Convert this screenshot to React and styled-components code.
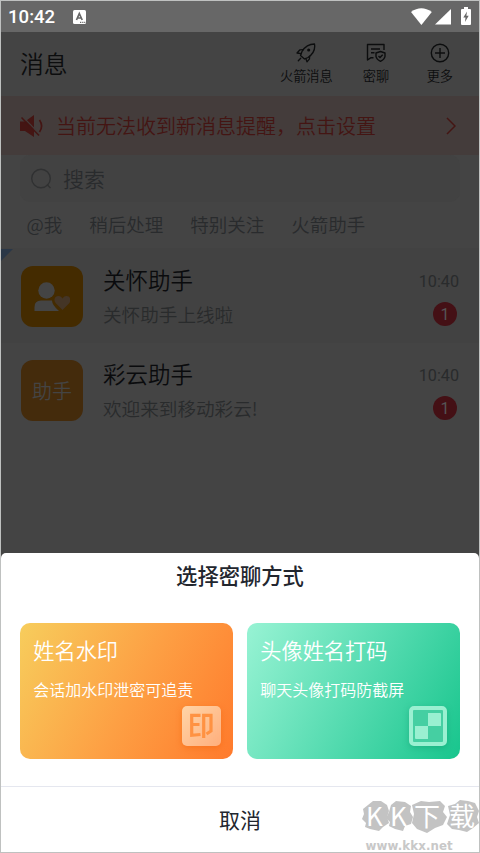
import React from 'react'
import styled, { createGlobalStyle } from 'styled-components'

const GlobalStyle = createGlobalStyle`
  * {
    box-sizing: border-box;
  }

  body {
    margin: 0;
    font-family: "Noto Sans CJK SC", "Noto Sans", sans-serif;
    font-weight: 350;
  }
`

const Phone = styled.div`
  position: relative;
  display: flex;
  flex-direction: column;
  width: 480px;
  height: 853px;
  overflow: hidden;
  border: 1px solid #bfc1c0;
  background-color: #444;
`

const StatusBar = styled.div`
  display: flex;
  align-items: center;
  height: 31px;
  flex: none;
  padding: 0 7px;
  background-color: #676767;
  color: #fff;
`

const Clock = styled.span`
  font: 500 18.6px/30px Roboto, sans-serif;
  width: 65px;
`

const StatusIcons = styled.div`
  display: flex;
  align-items: center;
  margin-left: auto;
`

const Header = styled.header`
  display: flex;
  justify-content: space-between;
  height: 64px;
  flex: none;
  padding: 0 26px 0 19px;
`

const PageTitle = styled.h1`
  margin: 0;
  font-size: 23.8px;
  font-weight: 350;
  line-height: 62px;
  color: #0c0d0e;
`

const Actions = styled.div`
  display: flex;
`

const Action = styled.div`
  display: flex;
  flex-direction: column;
  align-items: center;
  margin-left: ${props => props.gap || '30px'};
  padding-top: 10px;
  font-size: 13.2px;
  line-height: 20px;
  color: #0c0d0e;

  svg {
    margin-bottom: 3px;
  }
`

const Banner = styled.div`
  display: flex;
  align-items: center;
  height: 59px;
  flex: none;
  padding: 0 23px 0 18px;
  background-color: #443c3b;
  color: #441513;
`

const BannerText = styled.span`
  flex: 1;
  margin-left: 10px;
  font-size: 20px;
  line-height: 30px;
`

const SearchBox = styled.div`
  display: flex;
  align-items: center;
  height: 47px;
  flex: none;
  margin: 0 19px;
  padding-left: 10px;
  border-radius: 10px;
  background-color: #424242;
  font-size: 21px;
  line-height: 47px;
  color: #292b2d;

  svg {
    margin-right: 11px;
  }
`

const Tabs = styled.div`
  display: flex;
  gap: 27px;
  height: 46px;
  flex: none;
  padding: 0 25.5px;
  font-size: 18.5px;
  line-height: 45px;
  color: #292b2d;
`

const ChatRow = styled.div`
  position: relative;
  display: flex;
  height: ${props => (props.pinned ? '95px' : '94px')};
  flex: none;
  padding: ${props => (props.pinned ? '18px' : '17px')} 20px 0;
  background-color: ${props => (props.pinned ? '#424242' : '#444')};
`

const PinCorner = styled.div`
  position: absolute;
  left: 0;
  top: 1px;
  border-top: 12px solid #2a3747;
  border-right: 12px solid transparent;
`

const ChatAvatar = styled.div`
  display: flex;
  align-items: center;
  justify-content: center;
  width: 62px;
  height: 61px;
  border-radius: 12px;
  background-color: ${props => props.color};
  color: #444;
  font-size: 20px;
`

const ChatBody = styled.div`
  flex: 1;
  margin-left: 20px;
`

const ChatName = styled.div`
  font-size: 22.5px;
  line-height: 27px;
  color: #0a0b0d;
`

const ChatPreview = styled.div`
  margin-top: 6px;
  font-size: 18.6px;
  line-height: 30px;
  color: #292b2c;
`

const ChatMeta = styled.div`
  display: flex;
  flex-direction: column;
  align-items: flex-end;
  font-family: Roboto, sans-serif;
  font-weight: 400;
`

const ChatTime = styled.span`
  font-size: 16.2px;
  line-height: 31px;
  color: #292b2c;
`

const Unread = styled.span`
  width: 24px;
  height: 24px;
  margin: 5px 2px 0 0;
  border-radius: 50%;
  background-color: #441015;
  color: #555;
  font-size: 16px;
  line-height: 25px;
  text-align: center;
`

const Sheet = styled.section`
  display: flex;
  flex-direction: column;
  height: 299px;
  flex: none;
  margin-top: auto;
  border-radius: 5px 5px 0 0;
  background-color: #fff;
  color: #22262e;
`

const SheetTitle = styled.h2`
  margin: 0;
  height: 70px;
  font-size: 21.3px;
  font-weight: 500;
  line-height: 44px;
  text-align: center;
`

const Modes = styled.div`
  display: flex;
  gap: 14px;
  padding: 0 19px;
  height: 163px;
`

const ModeCard = styled.div`
  display: flex;
  flex-direction: column;
  width: 213px;
  height: 136px;
  padding: 12px 12px 12px 13.3px;
  border-radius: 10px;
  background: ${props => props.background};
  color: #fff;

  svg {
    align-self: flex-end;
    overflow: visible;
    filter: drop-shadow(0 2px 3px ${props => props.shadow});
  }
`

const ModeTitle = styled.div`
  font-size: 21.2px;
  line-height: 30px;
`

const ModeText = styled.div`
  margin-top: 9px;
  height: 32px;
  font-size: 16px;
  line-height: 30px;
`

const Cancel = styled.button`
  flex: 1;
  padding: 0 0 1px;
  border: 0;
  border-top: 1px solid #e5e7ef;
  background: none;
  color: #22262e;
  font-family: inherit;
  font-weight: 400;
  font-size: 21px;
  line-height: 30px;
`

const Watermark = styled.div`
  position: absolute;
  right: 0;
  bottom: 0;
  width: 118px;
  height: 55px;
`

const WifiIcon = () => (
  <svg width="21" height="17" viewBox="0 0 21 17" fill="#fff">
    <path d="M0 4Q10.300 -3.500 20.800 4L10.400 17Z" />
  </svg>
)

const SignalIcon = () => (
  <svg width="16" height="16" viewBox="0 0 16 16" fill="#fff" style={{ marginLeft: 3 }}>
    <path d="M0 15.500L16 0V15.500Z" />
  </svg>
)

const BatteryIcon = () => (
  <svg width="10" height="18" viewBox="0 0 10 18" style={{ marginLeft: 10, marginRight: 1, marginBottom: 2 }}>
    <path d="M3 0H7V2H9Q10 2 10 3V17Q10 18 9 18H1Q0 18 0 17V3Q0 2 1 2H3Z" fill="#fff" />
    <path d="M6 4.500L2.300 10.500H4.500L4 15L7.700 8.700H5.400Z" fill="#676767" />
  </svg>
)

const KeyboardIcon = () => (
  <svg width="13" height="14" viewBox="0 0 13 14">
    <rect width="13" height="14" rx="1.500" fill="#fff" />
    <path d="M3.500 10L6.300 3.500L9.200 10M4.700 8H8" stroke="#676767" strokeWidth="1.700" fill="none" />
    <path d="M7 12.300H8.300M9.200 12.300H10.400M11.200 12.300H12.300" stroke="#676767" strokeWidth="1.200" />
  </svg>
)

const RocketIcon = () => (
  <svg width="20" height="21" viewBox="0 0 20 21" fill="none" stroke="currentColor" strokeWidth="1.300" strokeLinejoin="round" strokeLinecap="round">
    <path d="M18.500 2C13 2 9 4.500 6 9.500L4.500 13.500L8.500 17L12 15.500C17 12 19.500 7.500 18.500 2Z" />
    <path d="M7.300 7.700L4 7.800L1 11L5.200 11.700M13.600 14.200L13.500 16.800L11 19.800L9.800 16.500M2.300 18.800L4.700 16.200" />
    <circle cx="12.700" cy="8" r="0.900" fill="currentColor" />
  </svg>
)

const SecretChatIcon = () => (
  <svg width="20" height="21" viewBox="0 0 20 21" fill="none" stroke="currentColor" strokeWidth="1.400" strokeLinejoin="round">
    <path d="M18 8V2.500H1.500V18L5 15.700H7.500M5 7H14M5 10.700H8.500" />
    <path d="M14.500 9.500L19 11V14.500Q18.500 17.500 14.500 19.300Q10.500 17.500 10 14.500V11Z" />
    <path d="M12.500 14L14 15.500L16.700 12.700" />
  </svg>
)

const MoreIcon = () => (
  <svg width="20" height="21" viewBox="0 0 20 21" fill="none" stroke="currentColor" strokeWidth="1.400">
    <circle cx="10" cy="11" r="8.700" />
    <path d="M10 6V16M5 11H15" />
  </svg>
)

const MutedIcon = () => (
  <svg width="27" height="26" viewBox="0 0 27 26">
    <path d="M1 8.500H6L15 2V24L6 18H1Z" fill="currentColor" />
    <path d="M20.500 7Q24.700 13 20.500 19" stroke="currentColor" strokeWidth="1.700" fill="none" />
    <path d="M3.500 3.500L20.500 21" stroke="#443c3b" strokeWidth="1.200" />
    <path d="M2.500 4.500L20 22.500" stroke="currentColor" strokeWidth="1.500" />
  </svg>
)

const ChevronIcon = () => (
  <svg width="10" height="18" viewBox="0 0 10 18" fill="none" stroke="currentColor" strokeWidth="1.500">
    <path d="M1 1L9 9L1 17" />
  </svg>
)

const SearchIcon = () => (
  <svg width="22" height="22" viewBox="0 0 22 22" fill="none" stroke="#303132" strokeWidth="1.400">
    <circle cx="11" cy="10.500" r="9.300" />
    <path d="M17 16.500L20.500 20" />
  </svg>
)

const CareIcon = () => (
  <svg width="36" height="29" viewBox="0 0 36 29">
    <circle cx="12.500" cy="8.500" r="8.200" fill="#444" />
    <path d="M0.500 29V25Q0.500 18.500 7 18.500H18Q18 23 25 29Z" fill="#444" />
    <path d="M28.500 28L22 21.500C18.500 17.500 21.500 13.500 25 14Q27.300 14.300 28.500 16.500Q29.700 14.300 32 14C35.500 13.500 38 17.500 35 21.500Z" fill="#443526" />
  </svg>
)

const StampIcon = () => (
  <svg width="39" height="40" viewBox="0 0 39 40">
    <defs>
      <linearGradient id="stamp" x1="0" y1="0" x2="1" y2="1">
        <stop offset="0" stopColor="#ffd5a7" />
        <stop offset="1" stopColor="#ffae7c" />
      </linearGradient>
    </defs>
    <rect width="39" height="40" rx="5" fill="url(#stamp)" />
    <g fill="none" stroke="#ff9242" strokeWidth="3.200">
      <path d="M18.500 9.300H9.700V29.300L18.500 28.500M9.700 18.500H17.500" />
      <path d="M21.700 32V9.300H29V25L24.500 28" />
    </g>
  </svg>
)

const MosaicIcon = () => (
  <svg width="38" height="40" viewBox="0 0 38 40" style={{ marginRight: 1 }}>
    <rect x="2" y="2" width="34" height="36" rx="3" fill="#45cfa2" stroke="#9af0d1" strokeWidth="4" />
    <path d="M19 7H31Q32 7 32 8V20H19ZM6 20H19V33H7Q6 33 6 32Z" fill="#9af0d1" />
  </svg>
)

// blobs behind the brand text
const LogoBlobs = styled.svg`
  position: absolute;
  left: 0;
  top: 0;
`

const LogoText = styled.div`
  position: absolute;
  left: 5px;
  top: 3px;
  display: flex;
  color: #fff;
  font-size: 26px;
  font-weight: 400;
  line-height: 29px;
`

const LogoLetter = styled.span`
  width: ${props => props.width};
`

const LogoUrl = styled.div`
  position: absolute;
  left: 4.5px;
  bottom: -1px;
  color: #c8c8c8;
  font: 700 11.8px/14px "DejaVu Sans", sans-serif;
  letter-spacing: 0.1px;
`

const KkLogo = () => (
  <>
    <LogoBlobs width="118" height="40" viewBox="0 0 118 40" fill="#c3c3c3">
      <path d="M7 8L12 4L20 4L26 8L28 14L26 20L28 26L22 30L18 34L9 32L4 30L5 26L1 22L3 17L2 12Z" />
      <path d="M30 8L35 4L44 5L50 9L49 15L52 20L50 27L44 29L42 34L34 32L28 29L29 25L25 21L28 15Z" />
      <path d="M51 8L60 4L68 5L79 4L84 9L82 15L86 20L82 28L74 31L66 36L56 32L51 26L53 17Z" />
      <path d="M87 9L94 7L99 3L107 4L114 6L118 14L116 20L118 26L112 31L106 35L98 33L91 32L86 27L89 18Z" />
    </LogoBlobs>
    <LogoText>
      <LogoLetter width="24px">K</LogoLetter>
      <LogoLetter width="24px">K</LogoLetter>
      <LogoLetter width="35px">下</LogoLetter>
      <LogoLetter width="27px">载</LogoLetter>
    </LogoText>
    <LogoUrl>www.kkx.net</LogoUrl>
  </>
)

const tabs = ['@我', '稍后处理', '特别关注', '火箭助手']

const chats = [
  {
    name: '关怀助手',
    preview: '关怀助手上线啦',
    color: '#442b00',
    avatar: <CareIcon />,
    pinned: true,
  },
  {
    name: '彩云助手',
    preview: '欢迎来到移动彩云!',
    color: '#442b0c',
    avatar: '助手',
    pinned: false,
  },
]

class App extends React.Component {
  render() {
    return (
      <>
        <GlobalStyle />
        <Phone>
          <StatusBar>
            <Clock>10:42</Clock>
            <KeyboardIcon />
            <StatusIcons>
              <WifiIcon />
              <SignalIcon />
              <BatteryIcon />
            </StatusIcons>
          </StatusBar>
          <Header>
            <PageTitle>消息</PageTitle>
            <Actions>
              <Action>
                <RocketIcon />
                火箭消息
              </Action>
              <Action>
                <SecretChatIcon />
                密聊
              </Action>
              <Action gap="37.500px">
                <MoreIcon />
                更多
              </Action>
            </Actions>
          </Header>
          <Banner>
            <MutedIcon />
            <BannerText>当前无法收到新消息提醒，点击设置</BannerText>
            <ChevronIcon />
          </Banner>
          <SearchBox>
            <SearchIcon />
            搜索
          </SearchBox>
          <Tabs>
            {tabs.map(tab => (
              <span key={tab}>{tab}</span>
            ))}
          </Tabs>
          {chats.map(chat => (
            <ChatRow key={chat.name} pinned={chat.pinned}>
              {chat.pinned && <PinCorner />}
              <ChatAvatar color={chat.color}>{chat.avatar}</ChatAvatar>
              <ChatBody>
                <ChatName>{chat.name}</ChatName>
                <ChatPreview>{chat.preview}</ChatPreview>
              </ChatBody>
              <ChatMeta>
                <ChatTime>10:40</ChatTime>
                <Unread>1</Unread>
              </ChatMeta>
            </ChatRow>
          ))}
          <Sheet>
            <SheetTitle>选择密聊方式</SheetTitle>
            <Modes>
              <ModeCard
                background="linear-gradient(118deg, #f7cd5c 0%, #fda044 52%, #ff7a2c 100%)"
                shadow="rgba(240, 90, 0, 0.4)"
              >
                <ModeTitle>姓名水印</ModeTitle>
                <ModeText>会话加水印泄密可追责</ModeText>
                <StampIcon />
              </ModeCard>
              <ModeCard
                background="linear-gradient(118deg, #98f3d4 0%, #55dbb0 52%, #18c58d 100%)"
                shadow="rgba(0, 130, 90, 0.3)"
              >
                <ModeTitle>头像姓名打码</ModeTitle>
                <ModeText>聊天头像打码防截屏</ModeText>
                <MosaicIcon />
              </ModeCard>
            </Modes>
            <Cancel>取消</Cancel>
          </Sheet>
          <Watermark>
            <KkLogo />
          </Watermark>
        </Phone>
      </>
    )
  }
}

export default App
